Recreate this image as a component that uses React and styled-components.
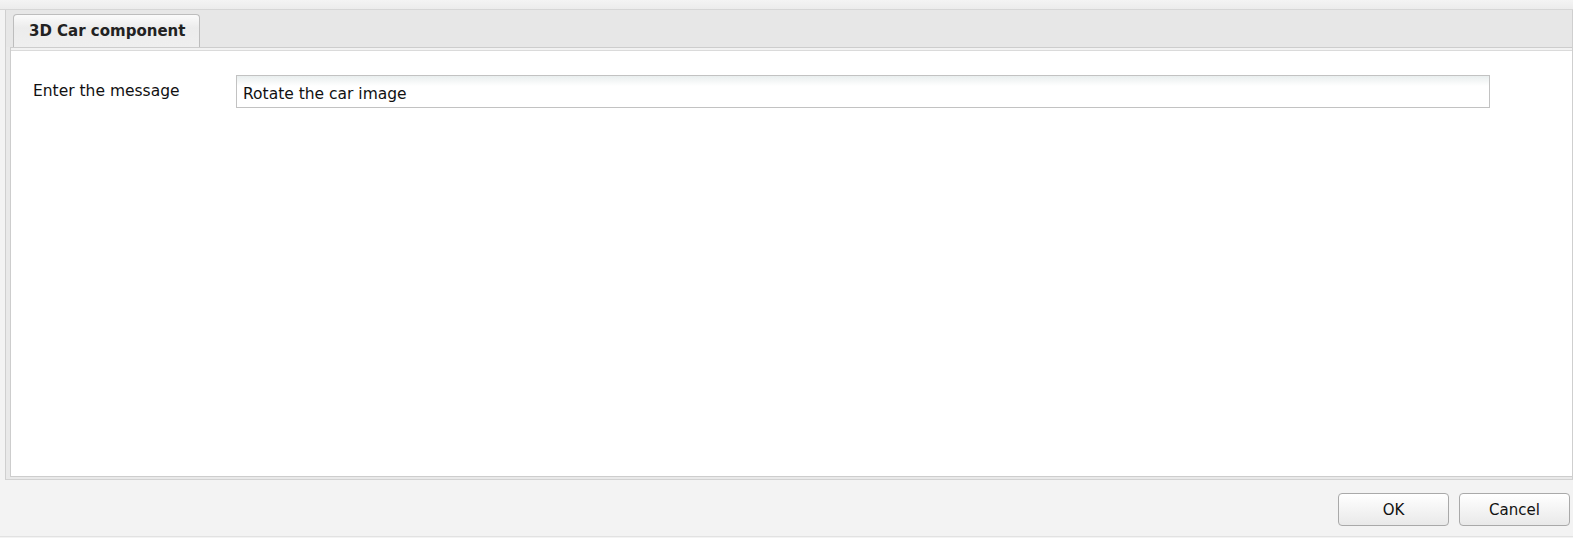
import React, { useState } from "react";
import styled, { createGlobalStyle } from "styled-components";

const GlobalStyle = createGlobalStyle`
  html, body {
    margin: 0;
    padding: 0;
    background: #f3f3f3;
  }
  body {
    font-family: "DejaVu Sans", Verdana, sans-serif;
    color: #111111;
  }
`;

const App = () => {
  const [message, setMessage] = useState("Rotate the car image");

  return (
    <Dialog>
      <GlobalStyle />
      <TopStrip />
      <Frame>
        <TabBar>
          <Tab>3D Car component</Tab>
        </TabBar>
        <Content>
          <FieldRow>
            <Label htmlFor="message">Enter the message</Label>
            <TextInput
              id="message"
              value={message}
              onChange={e => setMessage(e.target.value)}
            />
          </FieldRow>
        </Content>
      </Frame>
      <Footer>
        <Button>OK</Button>
        <Button>Cancel</Button>
      </Footer>
    </Dialog>
  );
};

export default App;

const Dialog = styled.div`
  width: 1573px;
  height: 538px;
  display: flex;
  flex-direction: column;
  background: #f3f3f3;
  overflow: hidden;
`;

const TopStrip = styled.div`
  height: 9px;
  flex: none;
  background: linear-gradient(#f4f4f4, #ececec);
  border-bottom: 1px solid #d6d6d6;
`;

const Frame = styled.div`
  margin-left: 5px;
  flex: none;
  display: flex;
  flex-direction: column;
  background: #e9e9e9;
  border-left: 1px solid #cfcfcf;
  border-right: 1px solid #cfcfcf;
  border-bottom: 1px solid #d2d2d2;
  padding: 0 0 2px 4px;
`;

const TabBar = styled.div`
  height: 37px;
  display: flex;
  align-items: flex-end;
  margin-left: -4px;
  padding-left: 7px;
  background: #e7e7e7;
`;

const Tab = styled.div`
  height: 33px;
  box-sizing: border-box;
  padding: 0 14px 0 15px;
  display: flex;
  align-items: center;
  font-weight: bold;
  font-size: 15px;
  color: #222222;
  background: linear-gradient(#fbfbfb, #ececec 40%, #efefef);
  border: 1px solid #bdbdbd;
  border-bottom: none;
  border-radius: 4px 4px 0 0;
`;

const Content = styled.div`
  height: 430px;
  box-sizing: border-box;
  background: #ffffff;
  border: 1px solid #cdcdcd;
  border-right: none;
  box-shadow: inset 0 2px 0 #f2f2f2, inset 0 3px 0 #dadada;
  padding: 27px 0 0 22px;
`;

const FieldRow = styled.div`
  display: flex;
  align-items: center;
`;

const Label = styled.label`
  width: 203px;
  flex: none;
  font-size: 15.5px;
  color: #111111;
  margin-top: -2px;
`;

const TextInput = styled.input`
  width: 1254px;
  height: 33px;
  box-sizing: border-box;
  padding: 5px 5px 0 6px;
  font-family: "DejaVu Sans", Verdana, sans-serif;
  font-size: 15.5px;
  color: #111111;
  border: 1px solid #c2c2c2;
  background: linear-gradient(#e9eeee, #ffffff 10px);
  outline: none;
`;

const Footer = styled.div`
  flex: 1;
  display: flex;
  justify-content: flex-end;
  align-items: flex-start;
  gap: 10px;
  padding: 13px 3px 0 0;
  border-bottom: 1px solid #e2e2e2;
  margin-bottom: 1px;
`;

const Button = styled.button`
  width: 111px;
  height: 33px;
  font-family: "DejaVu Sans", Verdana, sans-serif;
  font-size: 15px;
  color: #111111;
  border: 1px solid #a9a9a9;
  border-radius: 4px;
  background: linear-gradient(#ffffff, #f4f4f4 50%, #e9e9e9);
  cursor: pointer;
`;
